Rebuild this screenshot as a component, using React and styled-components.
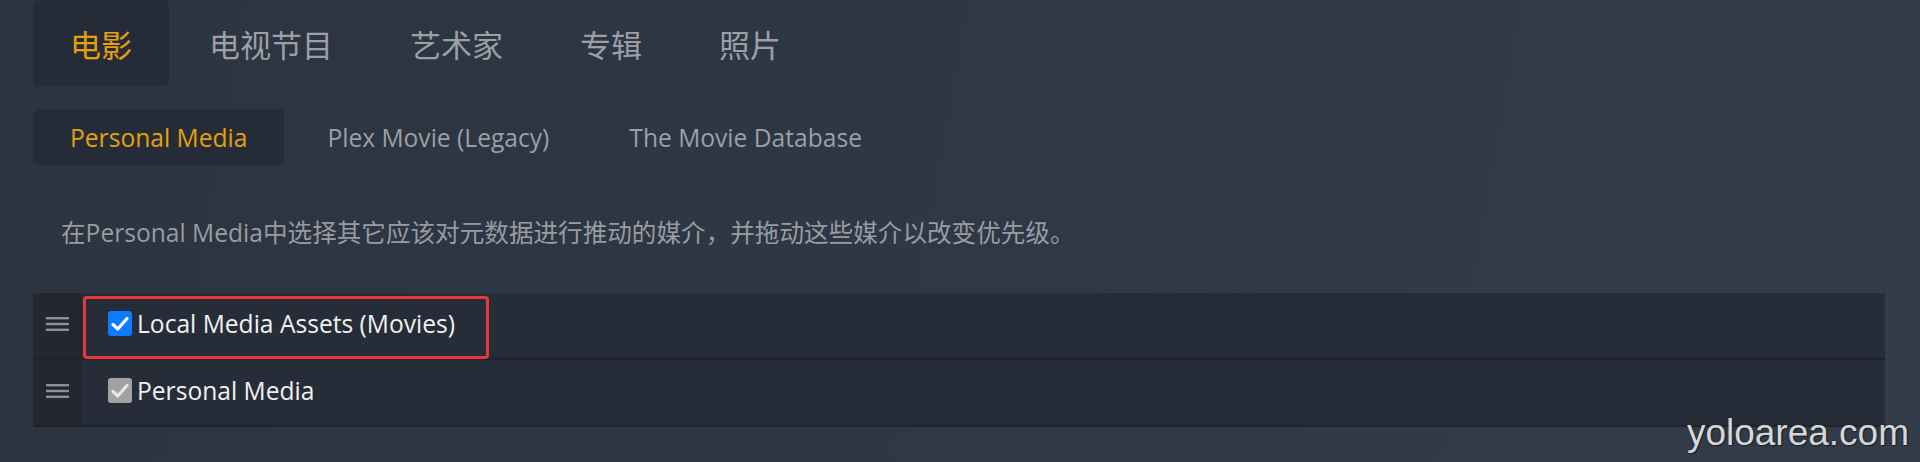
import React from 'react'
import styled, { createGlobalStyle } from 'styled-components'

const GlobalStyle = createGlobalStyle`
  html, body {
    margin: 0;
    padding: 0;
    height: 462px;
    overflow: hidden;
  }
  body {
    background: linear-gradient(100deg, #2c3440 0%, #2e3745 45%, #333c49 100%);
    font-family: "Open Sans", "Noto Sans CJK SC", sans-serif;
  }
`

const Page = styled.div`
  position: relative;
  height: 462px;
  padding: 0 35px 0 33px;
`

const TabBar = styled.div`
  display: flex;
  gap: ${p => p.gap || 2}px;
  height: ${p => p.h}px;
  margin-top: ${p => p.top || 0}px;
`

const Tab = styled.div`
  display: flex;
  align-items: center;
  padding: 0 37px;
  border-radius: 6px;
  font-size: ${p => p.size}px;
  font-family: "Open Sans", "Noto Sans CJK SC", sans-serif;
  color: ${p => (p.active ? '#e5a00d' : '#9c9fa5')};
  background: ${p => (p.active ? '#262c37' : 'transparent')};
  white-space: nowrap;
`

const Description = styled.p`
  margin: 51px 0 0;
  padding-left: 28px;
  line-height: 34px;
  font-size: 24.6px;
  color: #989ba1;
`

const List = styled.div`
  margin-top: 43px;
  background: #272d38;
`

const Row = styled.div`
  display: flex;
  height: 65px;
  border-bottom: 2px solid #1f242c;
`

const Handle = styled.div`
  width: 49px;
  flex: none;
  display: flex;
  align-items: center;
  justify-content: center;
  padding-bottom: 4px;
  box-sizing: border-box;
  background: #232830;
`

const Content = styled.div`
  position: relative;
  flex: 1;
  display: flex;
  align-items: center;
  padding: 0 0 4px 26px;
`

const Box = styled.span`
  width: 24px;
  height: 25px;
  border-radius: 3px;
  background: ${p => (p.disabled ? '#a2a2a2' : '#0b7bff')};
  display: flex;
  align-items: center;
  justify-content: center;
  flex: none;
`

const Label = styled.span`
  margin-left: 5px;
  font-size: 24.6px;
  color: #f0f0f0;
  white-space: nowrap;
`

const Highlight = styled.span`
  position: absolute;
  left: 1px;
  top: 3px;
  width: 406px;
  height: 63px;
  box-sizing: border-box;
  border: 3px solid #e23a3a;
  border-radius: 4px;
  pointer-events: none;
`

const Watermark = styled.div`
  position: absolute;
  right: 11px;
  bottom: 11px;
  font-family: "Liberation Sans", Arial, sans-serif;
  font-size: 37px;
  line-height: 37px;
  color: #d6d6d6;
  text-shadow: 0 0 2px #1c2128, 1px 1px 1px #1c2128;
`

const Grip = () => (
  <svg width="23" height="16" viewBox="0 0 23 16">
    <rect x="0" y="1" width="23" height="2.4" fill="#8c9097" />
    <rect x="0" y="6.8" width="23" height="2.4" fill="#8c9097" />
    <rect x="0" y="12.6" width="23" height="2.4" fill="#8c9097" />
  </svg>
)

const Check = ({ color }) => (
  <svg width="18" height="16" viewBox="0 0 18 16">
    <path d="M2 8.5 L6.8 13 L16 2.5" fill="none" stroke={color} strokeWidth="3.2" strokeLinecap="round" strokeLinejoin="round" />
  </svg>
)

const topTabs = ['电影', '电视节目', '艺术家', '专辑', '照片']
const subTabs = ['Personal Media', 'Plex Movie (Legacy)', 'The Movie Database']
const agents = [
  { name: 'Local Media Assets (Movies)', disabled: false, marked: true },
  { name: 'Personal Media', disabled: true }
]

export default function App() {
  return (
    <Page>
      <GlobalStyle />
      <TabBar h={86} gap={3}>
        {topTabs.map((t, i) => (
          <Tab key={t} size={31} active={i === 0}>{t}</Tab>
        ))}
      </TabBar>
      <TabBar h={56} top={23} gap={6}>
        {subTabs.map((t, i) => (
          <Tab key={t} size={24.6} active={i === 0}>{t}</Tab>
        ))}
      </TabBar>
      <Description>在Personal Media中选择其它应该对元数据进行推动的媒介，并拖动这些媒介以改变优先级。</Description>
      <List>
        {agents.map(a => (
          <Row key={a.name}>
            <Handle><Grip /></Handle>
            <Content>
              <Box disabled={a.disabled}>
                <Check color={a.disabled ? '#e6e6e6' : '#ffffff'} />
              </Box>
              <Label>{a.name}</Label>
              {a.marked && <Highlight />}
            </Content>
          </Row>
        ))}
      </List>
      <Watermark>yoloarea.com</Watermark>
    </Page>
  )
}
